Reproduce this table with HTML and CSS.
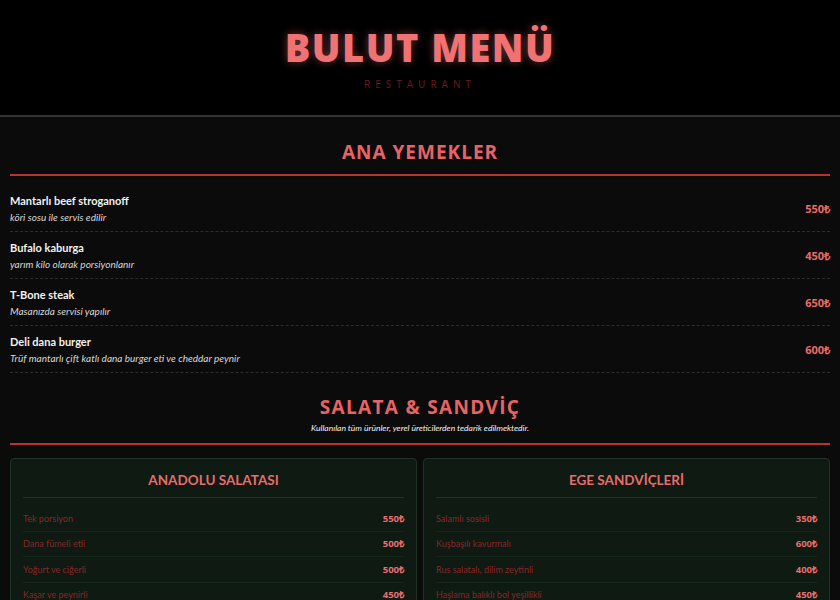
FILE: index.html
```html
<!DOCTYPE html>
<html lang="tr">
<head>
<meta charset="utf-8">
<title>Bulut Menü</title>
<link rel="stylesheet" href="styles.css">
</head>
<body>
<header class="hero">
  <h1 class="brand">BULUT MENÜ</h1>
  <p class="tagline">RESTAURANT</p>
</header>
<main class="menu">
  <section class="section">
    <h2 class="section-title">ANA YEMEKLER</h2>
    <div class="rule"></div>
    <ul class="dishes">
      <li class="dish">
        <div class="dish-info">
          <div class="dish-name">Mantarlı beef stroganoff</div>
          <div class="dish-desc">köri sosu ile servis edilir</div>
        </div>
        <div class="dish-price">550₺</div>
      </li>
      <li class="dish">
        <div class="dish-info">
          <div class="dish-name">Bufalo kaburga</div>
          <div class="dish-desc">yarım kilo olarak porsiyonlanır</div>
        </div>
        <div class="dish-price">450₺</div>
      </li>
      <li class="dish">
        <div class="dish-info">
          <div class="dish-name">T-Bone steak</div>
          <div class="dish-desc">Masanızda servisi yapılır</div>
        </div>
        <div class="dish-price">650₺</div>
      </li>
      <li class="dish">
        <div class="dish-info">
          <div class="dish-name">Deli dana burger</div>
          <div class="dish-desc">Trüf mantarlı çift katlı dana burger eti ve cheddar peynir</div>
        </div>
        <div class="dish-price">600₺</div>
      </li>
    </ul>
  </section>
  <section class="section">
    <h2 class="section-title title-2">SALATA &amp; SANDVİÇ</h2>
    <p class="section-note">Kullanılan tüm ürünler, yerel üreticilerden tedarik edilmektedir.</p>
    <div class="rule"></div>
    <div class="cards">
      <div class="card">
        <h3 class="card-title">ANADOLU SALATASI</h3>
        <ul class="card-list">
          <li class="card-item"><span class="ci-name">Tek porsiyon</span><span class="ci-price">550₺</span></li>
          <li class="card-item"><span class="ci-name">Dana fümeli etli</span><span class="ci-price">500₺</span></li>
          <li class="card-item"><span class="ci-name">Yoğurt ve ciğerli</span><span class="ci-price">500₺</span></li>
          <li class="card-item"><span class="ci-name">Kaşar ve peynirli</span><span class="ci-price">450₺</span></li>
        </ul>
      </div>
      <div class="card">
        <h3 class="card-title">EGE SANDVİÇLERİ</h3>
        <ul class="card-list">
          <li class="card-item"><span class="ci-name">Salamlı sosisli</span><span class="ci-price">350₺</span></li>
          <li class="card-item"><span class="ci-name">Kuşbaşılı kavurmalı</span><span class="ci-price">600₺</span></li>
          <li class="card-item"><span class="ci-name">Rus salatalı, dilim zeytinli</span><span class="ci-price">400₺</span></li>
          <li class="card-item"><span class="ci-name">Haşlama balıklı bol yeşillikli</span><span class="ci-price">450₺</span></li>
        </ul>
      </div>
    </div>
  </section>
  <section class="section">
    <h2 class="section-title">TATLILAR</h2>
    <div class="rule"></div>
    <ul class="dishes">
      <li class="dish">
        <div class="dish-info">
          <div class="dish-name">Fırın sütlaç</div>
          <div class="dish-desc">taş fırında pişirilir</div>
        </div>
        <div class="dish-price">150₺</div>
      </li>
      <li class="dish">
        <div class="dish-info">
          <div class="dish-name">Künefe</div>
          <div class="dish-desc">Hatay peyniri ile</div>
        </div>
        <div class="dish-price">200₺</div>
      </li>
    </ul>
  </section>
</main>
</body>
</html>
```

FILE: styles.css
```css
html {
  background: #0b0b0b;
}
::-webkit-scrollbar {
  width: 3px;
  background: #0b0b0b;
}
::-webkit-scrollbar-thumb {
  background: #7a7a7a;
}
body {
  margin: 0;
  background: #0b0b0b;
  color: #eeeeee;
  font-family: Lato, "Open Sans", sans-serif;
}
.hero {
  background: #000000;
  border-bottom: 2px solid #333333;
  height: 117px;
  box-sizing: border-box;
  padding-top: 26px;
  text-align: center;
}
.brand {
  margin: 0;
  font-family: "Open Sans", sans-serif;
  font-weight: 800;
  font-size: 38px;
  line-height: 42px;
  letter-spacing: 1.5px;
  color: #f07272;
  text-shadow: 0 0 8px rgba(240, 114, 114, 0.45);
}
.tagline {
  margin: 10px 0 0;
  font-family: "Open Sans", sans-serif;
  font-size: 10px;
  line-height: 12px;
  letter-spacing: 5px;
  color: #6e1c1c;
}
.menu {
  padding: 0 10px;
}
.section-title {
  margin: 0;
  padding-top: 22px;
  text-align: center;
  font-family: "Open Sans", sans-serif;
  font-weight: 700;
  font-size: 19px;
  line-height: 26px;
  letter-spacing: 1px;
  color: #e86464;
}
.title-2 {
  padding-top: 21px;
  letter-spacing: 1.3px;
}
.section-note {
  margin: 3px 0 0;
  text-align: center;
  font-size: 8.5px;
  line-height: 11px;
  font-style: italic;
  color: #f2f2f2;
}
.rule {
  height: 2px;
  background: #b83232;
  margin-top: 9px;
}
.section-note + .rule {
  margin-top: 9px;
}
.dishes {
  list-style: none;
  margin: 0;
  padding: 9px 0 0;
}
.dish {
  display: flex;
  align-items: center;
  justify-content: space-between;
  height: 47px;
  box-sizing: border-box;
  border-bottom: 1px dashed #2c2c2c;
  padding-top: 0;
}
.dish-name {
  font-weight: 700;
  font-size: 11px;
  line-height: 17px;
  color: #f2f2f2;
}
.dish-desc {
  font-style: italic;
  font-size: 10px;
  line-height: 16px;
  color: #d8d8d8;
}
.dish-price {
  font-family: "Open Sans", sans-serif;
  font-weight: 700;
  font-size: 11px;
  color: #e86c6c;
}
.cards {
  display: grid;
  grid-template-columns: 1fr 1fr;
  gap: 6px;
  margin-top: 13px;
}
.card {
  background: #0e1a12;
  border: 1px solid #1e3324;
  border-radius: 4px;
  padding: 0 12px;
}
.card-title {
  margin: 0;
  padding: 11px 0 7px;
  text-align: center;
  font-weight: 700;
  font-size: 13.5px;
  line-height: 20px;
  color: #e86c6c;
  border-bottom: 1px solid #1f3326;
}
.card-list {
  list-style: none;
  margin: 0;
  padding: 8px 0 0;
}
.card-item {
  display: flex;
  justify-content: space-between;
  align-items: center;
  height: 24.5px;
  border-bottom: 1px solid #15261a;
}
.ci-name {
  font-size: 9px;
  color: #862828;
}
.ci-price {
  font-family: "Open Sans", sans-serif;
  font-weight: 700;
  font-size: 9.5px;
  color: #e87070;
}
```
